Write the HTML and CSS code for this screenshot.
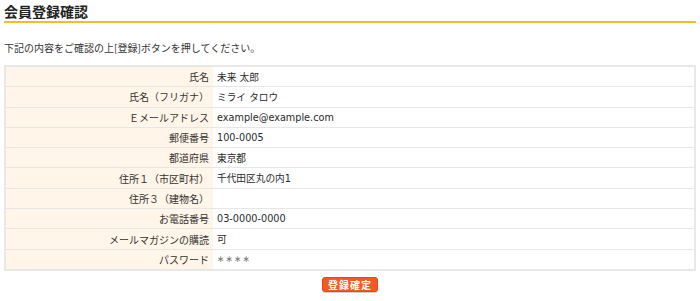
FILE: index.html
```html
<!DOCTYPE html>
<html lang="ja">
<head>
<meta charset="utf-8">
<link rel="stylesheet" href="styles.css">
</head>
<body>
<div class="page">
  <h1 class="title">会員登録確認</h1>
  <p class="lead">下記の内容をご確認の上[登録]ボタンを押してください。</p>
  <table class="confirm">
    <tr><th>氏名</th><td>未来 太郎</td></tr>
    <tr><th>氏名（フリガナ）</th><td>ミライ タロウ</td></tr>
    <tr><th>Ｅメールアドレス</th><td>example@example.com</td></tr>
    <tr><th>郵便番号</th><td>100-0005</td></tr>
    <tr><th>都道府県</th><td>東京都</td></tr>
    <tr><th>住所１（市区町村）</th><td>千代田区丸の内1</td></tr>
    <tr><th>住所３（建物名）</th><td></td></tr>
    <tr><th>お電話番号</th><td>03-0000-0000</td></tr>
    <tr><th>メールマガジンの購読</th><td>可</td></tr>
    <tr><th>パスワード</th><td class="pw">∗∗∗∗</td></tr>
  </table>
  <div class="actions"><button class="submit" type="button">登録確定</button></div>
</div>
</body>
</html>
```
FILE: styles.css
```css
html, body { margin: 0; padding: 0; background: #fff; }
body {
  font-family: "DejaVu Sans", "Noto Sans CJK JP", sans-serif;
  color: #333;
}
.page { padding: 0 4px; }
.title {
  margin: 0;
  padding: 3px 0 2px;
  font-family: "Noto Sans CJK JP", sans-serif;
  font-size: 14px;
  line-height: 16px;
  font-weight: 700;
  color: #222;
  border-bottom: 2px solid #f6bd23;
}
.lead {
  margin: 18px 0 10px;
  font-size: 10px;
  line-height: 14px;
  font-family: "Noto Sans CJK JP", sans-serif;
}
.confirm {
  width: 100%;
  border-collapse: collapse;
  border: 2px solid #e8e8e8;
  font-size: 10px;
}
.confirm th, .confirm td {
  border-top: 1px solid #e6e6e6;
  border-bottom: 1px solid #e6e6e6;
  height: 19.3px;
  padding: 0 4px;
  font-weight: 400;
}
.confirm th {
  width: 199px;
  text-align: right;
  background: #fff5e8;
  font-family: "Noto Sans CJK JP", sans-serif;
}
.confirm td { text-align: left; font-size: 9.7px; color: #2a2a2a; }
.confirm td.pw { color: #777; font-size: 9px; letter-spacing: 1px; }
.actions { text-align: center; padding-top: 3px; }
.submit {
  font-family: "Noto Sans CJK JP", sans-serif;
  font-size: 10px;
  font-weight: 700;
  color: #fff;
  background: #f45a22;
  border: 1px solid #e04a15;
  border-radius: 3px;
  padding: 0 5px;
  height: 15px;
  line-height: 13px;
  letter-spacing: 1px;
  box-shadow: 0 1px 1px rgba(0,0,0,0.2);
}
```
